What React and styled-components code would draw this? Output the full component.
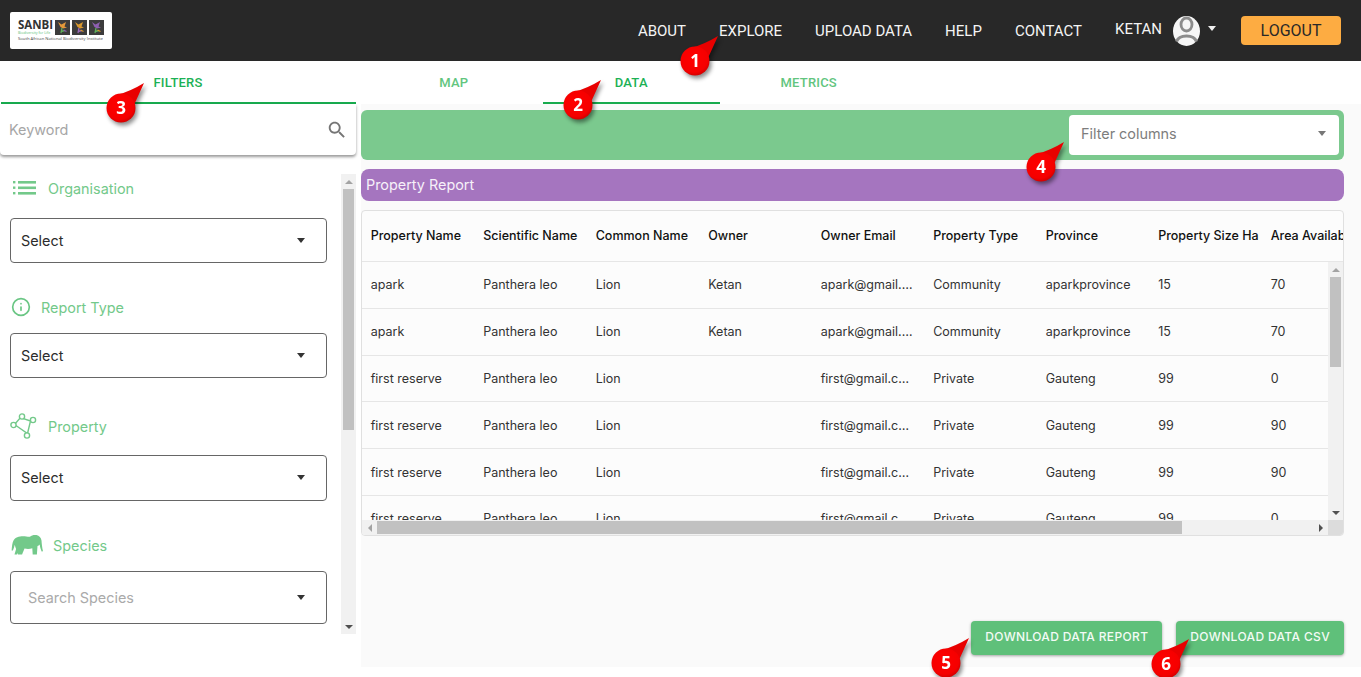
import React from "react";
import styled, { createGlobalStyle } from "styled-components";
import { Info } from "lucide-react";

const GlobalStyle = createGlobalStyle`
  html, body {
    margin: 0;
    padding: 0;
    background: #fff;
    overflow: hidden;
  }
  * { box-sizing: border-box; }
`;

const Page = styled.div`
  position: relative;
  width: 1361px;
  height: 677px;
  overflow: hidden;
  font-family: "Inter", "Liberation Sans", sans-serif;
`;

/* top bar */
const Header = styled.header`
  height: 61px;
  background: #282828;
  display: flex;
  align-items: center;
  justify-content: space-between;
  padding: 0 20px 0 10px;
`;
const LogoCard = styled.div`
  width: 102px;
  height: 37px;
  margin-top: -1px;
  background: #fff;
  border-radius: 2px;
  padding: 7px 8px 0 8px;
`;
const LogoTop = styled.div`
  display: flex;
  justify-content: space-between;
`;
const LogoWords = styled.div`
  display: flex;
  flex-direction: column;
`;
const LogoName = styled.span`
  font-family: "Open Sans", sans-serif;
  font-weight: 700;
  font-size: 11.5px;
  line-height: 12px;
  color: #333;
`;
const LogoMotto = styled.span`
  font-family: "Open Sans", sans-serif;
  font-size: 3.6px;
  line-height: 4px;
  color: #62c27c;
`;
const LogoTiles = styled.div`
  display: flex;
  gap: 2px;
  margin-top: 1px;
`;
const LogoFoot = styled.div`
  font-family: "Open Sans", sans-serif;
  font-size: 4.2px;
  line-height: 7px;
  white-space: nowrap;
  color: #444;
`;
const Nav = styled.nav`
  display: flex;
  align-items: center;
  font-family: "Roboto", sans-serif;
  font-size: 15px;
  color: #f4f4f4;
`;
const NavLink = styled.a`
  margin-right: 33px;
  white-space: nowrap;
`;
const UserName = styled.span`
  margin-top: -4px;
  margin-right: 11px;
`;
const Caret = styled.span`
  display: inline-block;
  width: 0;
  height: 0;
  border-left: 4.5px solid transparent;
  border-right: 4.5px solid transparent;
  border-top: 5px solid ${(p) => p.$color || "#333"};
`;
const UserCaret = styled(Caret)`
  margin: -4px 25px 0 8px;
`;
const LogoutButton = styled.button`
  width: 100px;
  height: 29px;
  border: 0;
  border-radius: 4px;
  background: #fdac42;
  color: #282828;
  font-family: "Roboto", sans-serif;
  font-size: 16px;
`;

/* page body */
const Body = styled.div`
  display: flex;
  gap: 5px;
`;
const Sidebar = styled.aside`
  width: 356px;
  flex: none;
`;
const Tab = styled.div`
  height: 43px;
  display: flex;
  align-items: center;
  justify-content: center;
  padding-top: 2px;
  font-family: "Roboto", sans-serif;
  font-size: 13px;
  font-weight: 500;
  letter-spacing: 0.2px;
  text-transform: uppercase;
  color: ${(p) => (p.$active ? "#1cb155" : "#62c57e")};
  border-bottom: 2px solid ${(p) => (p.$active ? "#18ab4e" : "transparent")};
`;
const SideTab = styled(Tab)`
  margin-left: 1px;
  padding-right: 1px;
`;
const SearchBox = styled.div`
  height: 51px;
  display: flex;
  align-items: center;
  justify-content: space-between;
  padding: 0 8px 0 9px;
  background: #fff;
  border-radius: 0 0 4px 4px;
  box-shadow: 0 2px 3px rgba(0, 0, 0, 0.4);
  font-size: 14.4px;
  color: #a6a6a6;
`;
const FilterArea = styled.div`
  display: flex;
  height: 460px;
  margin-top: 19px;
`;
const FilterList = styled.div`
  flex: 1;
  overflow: hidden;
  padding: 0 14px 0 10px;
`;
const FilterLabel = styled.div`
  height: 28px;
  display: flex;
  align-items: center;
  gap: ${(p) => p.$gap}px;
  margin-bottom: ${(p) => p.$below}px;
  font-size: 14.4px;
  color: #73c98a;
`;
const IconSlot = styled.span`
  display: flex;
  margin-left: ${(p) => p.$left || 0}px;
`;
const SelectBox = styled.div`
  height: ${(p) => p.$height}px;
  margin-bottom: ${(p) => p.$after || 0}px;
  display: flex;
  align-items: center;
  justify-content: space-between;
  padding: 0 21px 1px ${(p) => (p.$placeholder ? 17 : 10)}px;
  border: 1px solid #666;
  border-radius: 4px;
  font-size: 14.4px;
  color: ${(p) => (p.$placeholder ? "#aaa" : "#2c2c2c")};
`;

/* scrollbars */
const ScrollTrack = styled.div`
  display: flex;
  flex: none;
  flex-direction: ${(p) => (p.$horizontal ? "row" : "column")};
  background: #f1f1f1;
  ${(p) => (p.$horizontal ? "height: 15px;" : "width: 15px;")}
`;
const ScrollThumb = styled.div`
  background: #c1c1c1;
  ${(p) =>
    p.$horizontal
      ? `width: ${p.$size}px; height: 13px; margin: 1px 0;`
      : `height: ${p.$size}px; width: 11px; margin: 0 2px;`}
`;
const ScrollGap = styled.div`
  flex: 1;
`;
const ScrollArrow = styled.span`
  flex: none;
  width: 15px;
  height: 15px;
  display: flex;
  align-items: center;
  justify-content: center;
  &::before {
    content: "";
    border: 4px solid transparent;
    ${(p) => `border-${p.$dir === "up" ? "top" : p.$dir === "down" ? "bottom" : p.$dir}-width: 0;`}
    ${(p) =>
      `border-${{ up: "bottom", down: "top", left: "right", right: "left" }[p.$dir]}-color: ${p.$dim ? "#a3a3a3" : "#505050"};`}
  }
`;

/* main column */
const Main = styled.main`
  flex: 1;
  min-width: 0;
`;
const MainTabs = styled.div`
  display: grid;
  grid-template-columns: repeat(3, 177.5px);
  padding-left: 4px;
`;
const Workspace = styled.div`
  height: 563px;
  display: flex;
  flex-direction: column;
  background: #fafafa;
  padding: 6px 17px 12px 0;
`;
const FilterBar = styled.div`
  height: 50px;
  display: flex;
  align-items: center;
  justify-content: flex-end;
  padding-right: 5px;
  background: #7bc98e;
  border-radius: 6px;
`;
const ColumnPicker = styled.div`
  width: 270px;
  height: 40px;
  display: flex;
  align-items: center;
  justify-content: space-between;
  padding: 0 13px 3px 12px;
  background: #fff;
  border-radius: 4px;
  font-size: 14.4px;
  color: #7d7d7d;
`;
const ReportTitle = styled.div`
  height: 32px;
  margin-top: 9px;
  display: flex;
  align-items: center;
  padding: 0 0 2px 5px;
  background: #a575bf;
  border-radius: 8px;
  font-size: 14.4px;
  color: #f6f0f9;
`;
const Grid = styled.div`
  height: 326px;
  margin-top: 9px;
  display: flex;
  flex-direction: column;
  overflow: hidden;
  background: #fcfcfc;
  border: 1px solid #e0e0e0;
  border-radius: 4px;
`;
const HeadRow = styled.div`
  flex: none;
  height: 51px;
  display: flex;
  align-items: center;
  overflow: hidden;
  padding-bottom: 2px;
  border-bottom: 1px solid #e6e6e6;
`;
const GridMiddle = styled.div`
  flex: 1;
  min-height: 0;
  display: flex;
`;
const GridRows = styled.div`
  flex: 1;
  min-width: 0;
  overflow: hidden;
`;
const DataRow = styled.div`
  height: 46.8px;
  display: flex;
  align-items: center;
  border-bottom: 1px solid #e6e6e6;
`;
const Cell = styled.div`
  flex: none;
  width: 112.5px;
  padding: 0 10px 0 8.7px;
  overflow: hidden;
  white-space: nowrap;
  text-overflow: ellipsis;
  font-size: 12.5px;
  color: #333;
`;
const HeadCell = styled(Cell)`
  padding-right: 0;
  text-overflow: clip;
  color: #111;
  font-weight: 500;
`;
const GridBottom = styled.div`
  flex: none;
  display: flex;
`;
const HorizontalBar = styled(ScrollTrack)`
  flex: 1;
`;
const Corner = styled.div`
  flex: none;
  width: 15px;
  height: 15px;
  background: #dcdcdc;
`;
const Actions = styled.div`
  margin-top: auto;
  display: flex;
  justify-content: flex-end;
  gap: 14px;
`;
const ActionButton = styled.button`
  height: 34px;
  padding: 0 14px 3px;
  border: 0;
  border-radius: 4px;
  background: #5fc07a;
  color: #f3fbf5;
  font-family: "Inter", sans-serif;
  font-size: 12px;
  font-weight: 500;
  letter-spacing: 0.35px;
  white-space: nowrap;
  box-shadow: 0 1px 3px rgba(0, 0, 0, 0.35);
`;

/* numbered callouts laid over the screenshot */
const Callout = styled.svg`
  position: absolute;
  left: ${(p) => p.$x - 35}px;
  top: ${(p) => p.$y - 35}px;
  width: 70px;
  height: 70px;
  overflow: visible;
  filter: drop-shadow(2px 3px 2px rgba(0, 0, 0, 0.45));
`;

const columns = [
  "Property Name",
  "Scientific Name",
  "Common Name",
  "Owner",
  "Owner Email",
  "Property Type",
  "Province",
  "Property Size Ha",
  "Area Available",
];

const apark = ["apark", "Panthera leo", "Lion", "Ketan", "apark@gmail.com", "Community", "aparkprovince", "15", "70"];
const first = (area) => ["first reserve", "Panthera leo", "Lion", "", "first@gmail.com", "Private", "Gauteng", "99", area];
const rows = [apark, apark, first("0"), first("90"), first("90"), first("0")];

const callouts = [
  { n: 1, x: 695, y: 61 },
  { n: 2, x: 578, y: 105 },
  { n: 3, x: 121, y: 108 },
  { n: 4, x: 1041, y: 167 },
  { n: 5, x: 946, y: 663 },
  { n: 6, x: 1166, y: 664 },
];

function LogoTile({ flower, stem, accent }) {
  return (
    <svg width="15" height="15" viewBox="0 0 15 15">
      <rect width="15" height="15" fill="#3c3c3c" />
      <path d="M3 2l3.500 2.500L11 2 9.500 6.500 12 7.500 8 8.500 5.500 7z" fill={flower} />
      <path d="M7 8L6 13M6 11.500L10 10.500" stroke={stem} strokeWidth="1.300" fill="none" />
      <path d="M8.500 10l3 1.500" stroke={accent} strokeWidth="1.200" fill="none" />
    </svg>
  );
}

function ListIcon() {
  return (
    <svg width="23" height="14" viewBox="0 0 23 14" fill="#73c98a">
      <rect x="0" y="0" width="2.400" height="2.400" />
      <rect x="0" y="5.500" width="2.400" height="2.400" />
      <rect x="0" y="11" width="2.400" height="2.400" />
      <rect x="5" y="0" width="18" height="2.600" />
      <rect x="5" y="5.500" width="18" height="2.600" />
      <rect x="5" y="11" width="18" height="2.600" />
    </svg>
  );
}

function NodesIcon() {
  return (
    <svg width="27" height="26" viewBox="0 0 27 26" fill="none" stroke="#73c98a" strokeWidth="1.400">
      <path d="M4.500 11.500L10.500 4.500L20.500 8L17.500 20.500L4.500 11.500" />
      <circle cx="3.500" cy="12" r="2.600" fill="#fff" />
      <circle cx="12" cy="3.500" r="2.600" fill="#fff" />
      <circle cx="23" cy="7" r="2.600" fill="#fff" />
      <circle cx="17" cy="22.500" r="2.600" fill="#fff" />
    </svg>
  );
}

function ElephantIcon() {
  return (
    <svg width="32" height="22" viewBox="0 0 32 22" fill="#73c98a">
      <path d="M.6 16.500C1 12 1.200 9 2.500 6.500 4 3.500 8 2.200 12 2.200c2.500 0 5 .8 7 .6C20.500 1.200 23 .6 25.500 1c2.800.5 4.600 2.800 5 5.500.3 3.500.6 7 1.500 10.700l-1.400.3c-1-2.500-1.600-4.800-2-7-.5.800-1.200 1.300-2.100 1.500l-.6 8.600h-4.200l-.4-6.400c-2.500 1-5.500.9-7.800.3-.6 1.800-1.500 3.500-2.400 6.100H6.800l-.1-1.500-.9 1.500H3.500l1.600-5.500c-.6-1.300-1-2.600-1.300-4.300-.6 2-1 3.900-1.900 5.800z" />
    </svg>
  );
}

function SearchIcon() {
  return (
    <svg width="22" height="22" viewBox="0 0 24 24" fill="#757575">
      <path d="M15.5 14h-.79l-.28-.27C15.41 12.59 16 11.11 16 9.500 16 5.910 13.090 3 9.500 3S3 5.910 3 9.500 5.910 16 9.500 16c1.610 0 3.090-.59 4.230-1.570l.27.28v.79l5 4.990L20.490 19l-4.990-5zm-6 0C7.010 14 5 11.990 5 9.500S7.010 5 9.500 5 14 7.010 14 9.500 11.990 14 9.500 14z" />
    </svg>
  );
}

function AvatarIcon() {
  return (
    <svg width="27" height="30" viewBox="0 0 27 30">
      <ellipse cx="13.500" cy="15" rx="13.500" ry="15" fill="#f6f6f6" />
      <ellipse cx="13.500" cy="8.500" rx="5.500" ry="6.500" fill="none" stroke="#8c8c8c" strokeWidth="2.800" />
      <path d="M3.500 25.500C5 21.500 9 20 13.500 20S22 21.500 23.500 25.500" fill="none" stroke="#8c8c8c" strokeWidth="3.200" />
    </svg>
  );
}

function CalloutMark({ n, x, y }) {
  return (
    <Callout $x={x} $y={y} viewBox="-35 -35 70 70">
      <defs>
        <radialGradient id={`callout-${n}`} cx="45%" cy="40%" r="65%">
          <stop offset="0%" stopColor="#ff0000" />
          <stop offset="75%" stopColor="#f50000" />
          <stop offset="100%" stopColor="#c80000" />
        </radialGradient>
      </defs>
      <path d="M-4 -13Q10 -17 23 -25Q18 -14 13 -3z" fill="#e80000" />
      <circle r="14.500" fill={`url(#callout-${n})`} />
      <text
        y="6"
        textAnchor="middle"
        fontFamily="Open Sans, sans-serif"
        fontWeight="700"
        fontSize="17"
        fill="#fff"
      >
        {n}
      </text>
    </Callout>
  );
}

export default function App() {
  return (
    <Page>
      <GlobalStyle />
      <Header>
        <LogoCard>
          <LogoTop>
            <LogoWords>
              <LogoName>SANBI</LogoName>
              <LogoMotto>Biodiversity for Life</LogoMotto>
            </LogoWords>
            <LogoTiles>
              <LogoTile flower="#e3983a" stem="#5fae5a" accent="#8e5fb0" />
              <LogoTile flower="#d9982f" stem="#9a68b8" accent="#d9982f" />
              <LogoTile flower="#8e5fb0" stem="#5fae5a" accent="#d9982f" />
            </LogoTiles>
          </LogoTop>
          <LogoFoot>South African National Biodiversity Institute</LogoFoot>
        </LogoCard>
        <Nav>
          <NavLink>ABOUT</NavLink>
          <NavLink>EXPLORE</NavLink>
          <NavLink>UPLOAD DATA</NavLink>
          <NavLink>HELP</NavLink>
          <NavLink>CONTACT</NavLink>
          <UserName>KETAN</UserName>
          <AvatarIcon />
          <UserCaret $color="#f0f0f0" />
          <LogoutButton>LOGOUT</LogoutButton>
        </Nav>
      </Header>

      <Body>
        <Sidebar>
          <SideTab $active>Filters</SideTab>
          <SearchBox>
            Keyword
            <SearchIcon />
          </SearchBox>
          <FilterArea>
            <FilterList>
              <FilterLabel $gap={12} $below={16}>
                <IconSlot $left={3}>
                  <ListIcon />
                </IconSlot>
                Organisation
              </FilterLabel>
              <SelectBox $height={45} $after={30}>
                Select
                <Caret />
              </SelectBox>
              <FilterLabel $gap={10} $below={12}>
                <IconSlot $left={1}>
                  <Info size={20} color="#6ac684" strokeWidth={2} />
                </IconSlot>
                Report Type
              </FilterLabel>
              <SelectBox $height={45} $after={34}>
                Select
                <Caret />
              </SelectBox>
              <FilterLabel $gap={11} $below={15}>
                <IconSlot>
                  <NodesIcon />
                </IconSlot>
                Property
              </FilterLabel>
              <SelectBox $height={46} $after={30}>
                Select
                <Caret />
              </SelectBox>
              <FilterLabel $gap={10} $below={12}>
                <IconSlot $left={1}>
                  <ElephantIcon />
                </IconSlot>
                Species
              </FilterLabel>
              <SelectBox $height={53} $placeholder>
                Search Species
                <Caret />
              </SelectBox>
            </FilterList>
            <ScrollTrack>
              <ScrollArrow $dir="up" $dim />
              <ScrollThumb $size={241} />
              <ScrollGap />
              <ScrollArrow $dir="down" />
            </ScrollTrack>
          </FilterArea>
        </Sidebar>

        <Main>
          <MainTabs>
            <Tab>Map</Tab>
            <Tab $active>Data</Tab>
            <Tab>Metrics</Tab>
          </MainTabs>
          <Workspace>
            <FilterBar>
              <ColumnPicker>
                Filter columns
                <Caret $color="#777" />
              </ColumnPicker>
            </FilterBar>
            <ReportTitle>Property Report</ReportTitle>
            <Grid>
              <HeadRow>
                {columns.map((name) => (
                  <HeadCell key={name}>{name}</HeadCell>
                ))}
              </HeadRow>
              <GridMiddle>
                <GridRows>
                  {rows.map((row, i) => (
                    <DataRow key={i}>
                      {row.map((value, j) => (
                        <Cell key={j}>{value}</Cell>
                      ))}
                    </DataRow>
                  ))}
                </GridRows>
                <ScrollTrack>
                  <ScrollArrow $dir="up" $dim />
                  <ScrollThumb $size={90} />
                  <ScrollGap />
                  <ScrollArrow $dir="down" />
                </ScrollTrack>
              </GridMiddle>
              <GridBottom>
                <HorizontalBar $horizontal>
                  <ScrollArrow $dir="left" $dim />
                  <ScrollThumb $horizontal $size={805} />
                  <ScrollGap />
                  <ScrollArrow $dir="right" />
                </HorizontalBar>
                <Corner />
              </GridBottom>
            </Grid>
            <Actions>
              <ActionButton>DOWNLOAD DATA REPORT</ActionButton>
              <ActionButton>DOWNLOAD DATA CSV</ActionButton>
            </Actions>
          </Workspace>
        </Main>
      </Body>

      {callouts.map((c) => (
        <CalloutMark key={c.n} {...c} />
      ))}
    </Page>
  );
}
